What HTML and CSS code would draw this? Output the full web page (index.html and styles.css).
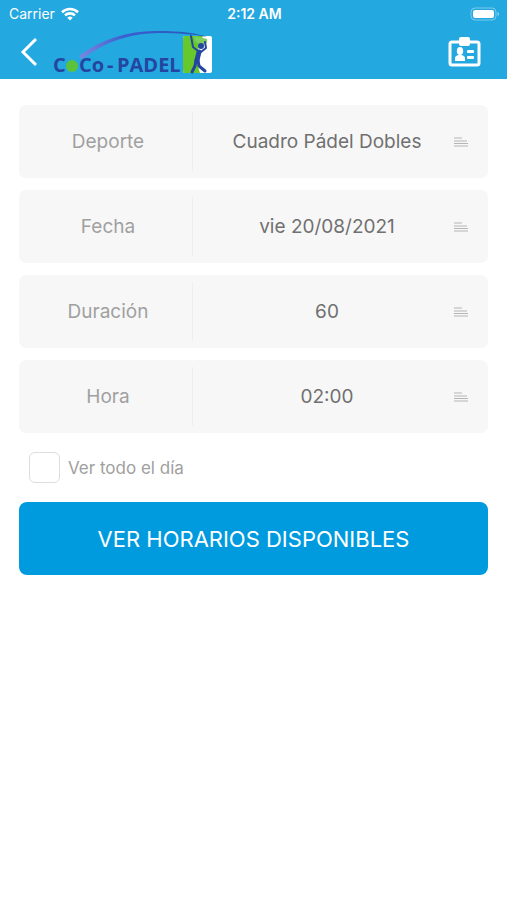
FILE: index.html
```html
<!DOCTYPE html>
<html lang="es">
<head>
  <meta charset="UTF-8" />
  <meta name="viewport" content="width=device-width, initial-scale=1" />
  <title>CoCo - Padel</title>
  <link rel="stylesheet" href="styles.css">
</head>
<body>
  <header>
    <div class="status-bar">
      <div class="carrier">
        <span>Carrier</span>
        <svg width="18" height="14" viewBox="0 0 18 14" fill="none" stroke="#fff" stroke-width="2.6">
          <path d="M1 5.2a11.5 11.5 0 0 1 16 0" />
          <path d="M4 8.4a7.2 7.2 0 0 1 10 0" />
          <path d="M9 13.6L6.3 10.8a3.9 3.9 0 0 1 5.4 0z" fill="#fff" stroke="none" />
        </svg>
      </div>
      <div class="clock">2:12 AM</div>
      <div class="battery">
        <svg width="30" height="14" viewBox="0 0 30 14">
          <rect x="1" y="1" width="25" height="12" rx="4" fill="none" stroke="#fff" stroke-opacity="0.4" />
          <rect x="3" y="3" width="21" height="8" rx="2" fill="#fff" />
          <path d="M27.5 5v4q1.6-.6 1.6-2t-1.6-2z" fill="#fff" fill-opacity="0.5" />
        </svg>
      </div>
    </div>

    <nav class="nav-bar">
      <button type="button" class="icon-button" aria-label="Volver">
        <svg width="18" height="30" viewBox="0 0 18 30" fill="none" stroke="#fff" stroke-width="3">
          <path d="M16 2L3 15l13 13" />
        </svg>
      </button>

      <svg class="logo" width="162" height="51" viewBox="0 0 162 51" role="img" aria-label="CoCo - Padel">
        <defs>
          <linearGradient id="swing">
            <stop offset="0" stop-color="#7d86e0" />
            <stop offset="0.35" stop-color="#3b5fd0" />
            <stop offset="1" stop-color="#2458b4" />
          </linearGradient>
        </defs>
        <text x="1" y="44">C</text>
        <circle cx="20" cy="38" r="6" fill="#5cc23c" />
        <text x="27" y="44">Co</text>
        <text x="55" y="44">-</text>
        <text x="65" y="44">PADEL</text>
        <rect x="131" y="8" width="29" height="37" rx="2" fill="#fff" />
        <path d="M133 8h18c-5 9-8 24-3 37h-15q-2 0-2-2V10q0-2 2-2z" fill="#66c82c" />
        <path d="M142 8l13 3c1 4-2 6-6 6-4-1-6-4-7-9z" fill="#7dce5c" />
        <path d="M27 28C50 10 80 2 107 3c20 0 38 2 48 6-14-3-29-4-48-4C80 5 54 13 30 31z" fill="url(#swing)" />
        <circle cx="149" cy="18" r="3" fill="#2445a0" />
        <g fill="none" stroke="#2445a0" stroke-linecap="round" stroke-linejoin="round">
          <path d="M139 8l2 11 5 4" stroke-width="2" />
          <path d="M147 24l-2 8" stroke-width="5" />
          <path d="M149 24l5-4-1-6" stroke-width="2" />
          <path d="M144 32l-1 6-3 6" stroke-width="3" />
          <path d="M146 32l1 6 6 5" stroke-width="3" />
        </g>
      </svg>

      <button type="button" class="icon-button profile" aria-label="Mi ficha">
        <svg width="33" height="30" viewBox="0 0 33 30">
          <rect x="2" y="5" width="29" height="23" rx="2" fill="none" stroke="#fff" stroke-width="3" />
          <rect x="11" y="0" width="11" height="9" rx="2" fill="#fff" />
          <ellipse cx="12" cy="14" rx="3.2" ry="4" fill="#fff" />
          <path d="M7 24v-3q0-2 3.500-3h3q3.500 1 3.500 3v3z" fill="#fff" />
          <rect x="19" y="13" width="7" height="3" rx="1" fill="#fff" />
          <rect x="19" y="19" width="7" height="3" rx="1" fill="#fff" />
        </svg>
      </button>
    </nav>
  </header>

  <main>
    <form>
      <div class="field">
        <label for="deporte">Deporte</label>
        <select id="deporte">
          <option>Cuadro Pádel Dobles</option>
        </select>
        <svg class="lines" width="14" height="10" viewBox="0 0 14 10"><path d="M0 1h8M0 4h13M0 6.500h14M0 9h14" /></svg>
      </div>

      <div class="field">
        <label for="fecha">Fecha</label>
        <select id="fecha">
          <option>vie 20/08/2021</option>
        </select>
        <svg class="lines" width="14" height="10" viewBox="0 0 14 10"><path d="M0 1h8M0 4h13M0 6.500h14M0 9h14" /></svg>
      </div>

      <div class="field">
        <label for="duracion">Duración</label>
        <select id="duracion">
          <option>60</option>
        </select>
        <svg class="lines" width="14" height="10" viewBox="0 0 14 10"><path d="M0 1h8M0 4h13M0 6.500h14M0 9h14" /></svg>
      </div>

      <div class="field">
        <label for="hora">Hora</label>
        <select id="hora">
          <option>02:00</option>
        </select>
        <svg class="lines" width="14" height="10" viewBox="0 0 14 10"><path d="M0 1h8M0 4h13M0 6.500h14M0 9h14" /></svg>
      </div>

      <div class="all-day">
        <input type="checkbox" id="todoElDia" />
        <label for="todoElDia">Ver todo el día</label>
      </div>

      <button type="button" class="submit">VER HORARIOS DISPONIBLES</button>
    </form>
  </main>
</body>
</html>
```

FILE: styles.css
```css
* {
  box-sizing: border-box;
}

body {
  margin: 0;
  background-color: #fff;
  color: #707070;
  font-family: Inter, "Liberation Sans", sans-serif;
}

header {
  background-color: #24a8e0;
  color: #fff;
}

.status-bar {
  display: grid;
  grid-template-columns: 1fr auto 1fr;
  align-items: center;
  height: 27px;
  padding: 0 7px 0 9px;
  font-size: 14px;
}

.carrier {
  display: flex;
  align-items: center;
  gap: 6px;
}

.clock {
  font-weight: 600;
}

.battery {
  display: flex;
  justify-content: flex-end;
}

.nav-bar {
  display: flex;
  align-items: center;
  height: 52px;
  padding: 0 26px 0 20px;
}

.icon-button {
  display: flex;
  padding: 0 0 2px;
  border: none;
  background: none;
  cursor: pointer;
}

.logo {
  margin-left: 14px;
}

.logo text {
  fill: #2445a0;
  font-family: "Open Sans", sans-serif;
  font-size: 20px;
  font-weight: 700;
}

.profile {
  margin-left: auto;
}

form {
  display: flex;
  flex-direction: column;
  gap: 12px;
  padding: 26px 19px;
}

.field {
  display: flex;
  align-items: center;
  height: 73px;
  padding: 7px 20px 7px 5px;
  border-radius: 7px;
  background-color: #f7f7f7;
  font-size: 19px;
}

.field label {
  width: 168px;
  color: #a0a0a0;
  text-align: center;
}

.field select {
  flex: 1;
  min-width: 0;
  height: 100%;
  padding: 0 0 0 7px;
  border: none;
  border-left: 1px solid #eee;
  background: none;
  color: #707070;
  font: inherit;
  text-align: center;
  text-align-last: center;
  appearance: none;
  cursor: pointer;
}

.lines {
  fill: none;
  stroke: #b5b5b5;
}

.all-day {
  display: flex;
  align-items: center;
  gap: 8px;
  padding: 7px 10px;
  color: #a0a0a0;
  font-size: 17px;
}

.all-day input {
  width: 31px;
  height: 31px;
  margin: 0;
  border: 1px solid #ddd;
  border-radius: 6px;
  background-color: #fff;
  appearance: none;
}

.all-day input:checked {
  background-color: #009bde;
}

.submit {
  height: 73px;
  border: none;
  border-radius: 8px;
  background-color: #009bde;
  color: #fff;
  font-family: inherit;
  font-size: 22px;
  cursor: pointer;
}
```
